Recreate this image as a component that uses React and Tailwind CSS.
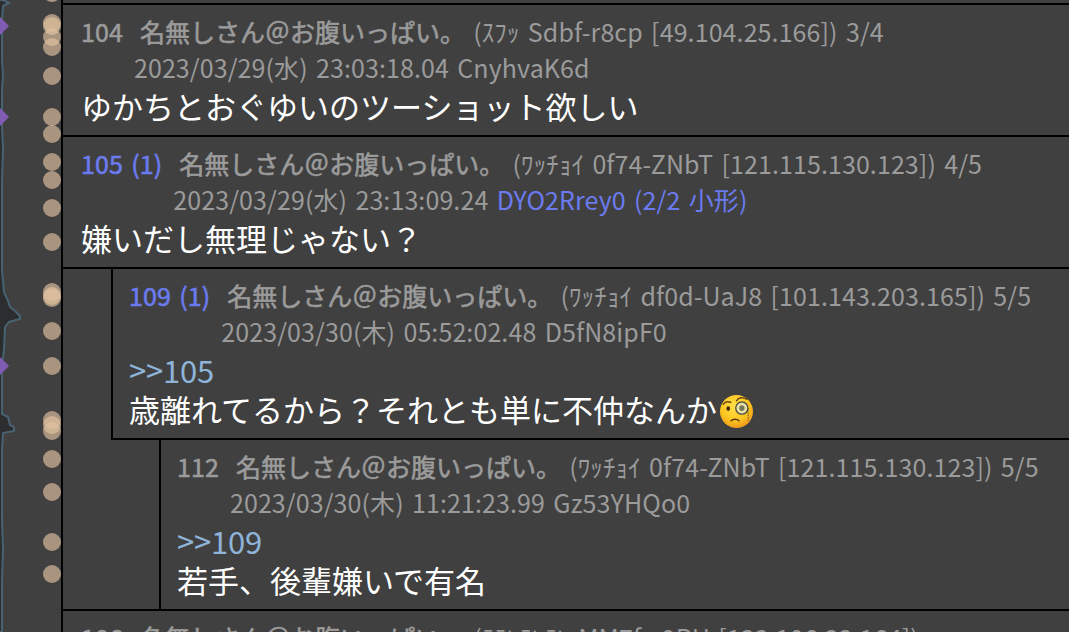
const posts = [
    {
        id: "104",
        level: 0,
        trip: "(ｽﾌｯ Sdbf-r8cp [49.104.25.166]) 3/4",
        date: "2023/03/29(水) 23:03:18.04",
        uid: "CnyhvaK6d",
        body: "ゆかちとおぐゆいのツーショット欲しい",
    },
    {
        id: "105 (1)",
        level: 0,
        popular: true,
        trip: "(ﾜｯﾁｮｲ 0f74-ZNbT [121.115.130.123]) 4/5",
        date: "2023/03/29(水) 23:13:09.24",
        uid: "DYO2Rrey0 (2/2 小形)",
        marked: true,
        body: "嫌いだし無理じゃない？",
    },
    {
        id: "109 (1)",
        level: 1,
        popular: true,
        trip: "(ﾜｯﾁｮｲ df0d-UaJ8 [101.143.203.165]) 5/5",
        date: "2023/03/30(木) 05:52:02.48",
        uid: "D5fN8ipF0",
        anchor: ">>105",
        body: "歳離れてるから？それとも単に不仲なんか",
        emoji: true,
    },
    {
        id: "112",
        level: 2,
        trip: "(ﾜｯﾁｮｲ 0f74-ZNbT [121.115.130.123]) 5/5",
        date: "2023/03/30(木) 11:21:23.99",
        uid: "Gz53YHQo0",
        anchor: ">>109",
        body: "若手、後輩嫌いで有名",
    },
    {
        id: "106",
        level: 0,
        trip: "(ﾃﾃﾝﾃﾝﾃﾝ MM7f-x9RH [133.106.32.164])",
    },
];

const levels = ["pl-[18px]", "ml-12 border-l-2 pl-4", "ml-24 border-l-2 pl-4"];

const dots = [-7, 23, 26, 37, 47, 76, 117, 134, 162, 180, 208, 242, 292, 296, 298, 331, 366, 420, 425, 431, 459, 492, 542, 574];

const MonocleFace = () => (
    <svg viewBox="0 0 36 36" className="inline-block w-[35px] h-[35px] mt-[-5px] ml-[2px] align-[-7px]">
        <defs>
            <radialGradient id="face" cx="45%" cy="35%" r="65%">
                <stop offset="0" stopColor="#ffe04a" />
                <stop offset="0.65" stopColor="#fbc51f" />
                <stop offset="1" stopColor="#ee9a1c" />
            </radialGradient>
        </defs>
        <circle cx="18" cy="18" r="17" fill="url(#face)" />
        <path d="M4.5 10.5C6 8 9 7.4 12 8.5" fill="none" stroke="#6b4518" strokeWidth="1.5" strokeLinecap="round" />
        <path d="M18 7C20 3.5 25 2.8 28.5 5.5" fill="none" stroke="#6b4518" strokeWidth="1.5" strokeLinecap="round" />
        <ellipse cx="9.5" cy="15" rx="1.9" ry="2.5" fill="#422b0d" />
        <circle cx="23.5" cy="14.5" r="6.3" fill="#d9d7a0" stroke="#4b4a42" strokeWidth="1.3" />
        <circle cx="23.5" cy="14.5" r="4.8" fill="#e9e3a6" />
        <ellipse cx="23.5" cy="14.5" rx="2.8" ry="3" fill="#77785f" />
        <path d="M30 14.5V28" fill="none" stroke="#6f5a28" strokeWidth="1" strokeDasharray="1.5 0.8" />
        <path d="M12.5 27.5C14.5 25.5 18.5 25.5 20.5 27.5" fill="none" stroke="#5a3510" strokeWidth="1.7" strokeLinecap="round" />
    </svg>
);

const Timeline = () => (
    <svg width="61" height="632" viewBox="0 0 61 632" className="shrink-0">
        <path
            d="M-2 0H3L9 3L3 6L2 20V60L3 75L2 90V125L3 150L2 180V270L4 292L8 301L10 307L15 311L20 316L20 319L9 322L5 327L4 350L2 365V414L8 417L10 425L14 427V431L3 433L2 450V520L3 550L2 580V632H-2Z"
            fill="#2b2d2e"
            stroke="#486272"
            strokeWidth="2"
        />
        <g fill="#805cb4">
            <path d="M0 17L9 26L0 35Z" />
            <path d="M0 108L9 117L0 126Z" />
            <path d="M0 357L9 366L0 375Z" />
        </g>
        <g fill="#e2c3a1" fillOpacity="0.65">
            {dots.map((y) => (
                <circle key={y} cx="52" cy={y} r="9" />
            ))}
        </g>
    </svg>
);

const Post = ({ post }) => (
    <article className={`border-black pt-[8px] pb-[10px] whitespace-nowrap ${levels[post.level]}`}>
        <header className="flex gap-[11px] mb-px text-[25px] leading-[36px] [word-spacing:2.6px] text-[#9b9b9b]">
            <span className={`tracking-[0.1px] [-webkit-text-stroke:0.6px_currentColor] ${post.popular ? "text-[#6b7bef]" : ""}`}>
                {post.id}
            </span>
            <div>
                <div className="pl-[6px]">
                    <span className="[-webkit-text-stroke:0.6px_currentColor]">名無しさん＠お腹いっぱい。</span>{" "}
                    <span className="tracking-[0.1px]">{post.trip}</span>
                </div>
                {post.date && (
                    <div className="tracking-[0.1px]">
                        {post.date} <span className={post.marked ? "text-[#6b7bef]" : ""}>{post.uid}</span>
                    </div>
                )}
            </div>
        </header>
        {post.body && (
            <div className="text-[31px] leading-[39px] text-white">
                {post.anchor && <div className="text-[#8fb4d9] tracking-[-0.2px]">{post.anchor}</div>}
                <div className="h-[39px]">
                    {post.body}
                    {post.emoji && <MonocleFace />}
                </div>
            </div>
        )}
    </article>
);

export default function App() {
    return (
        <div className="flex w-[1069px] h-[632px] overflow-hidden bg-[#404040] font-['Noto_Sans_CJK_JP',sans-serif]">
            <Timeline />
            <main className="flex-1 min-w-0 border-l-2 border-black pt-[3px]">
                {posts.map((post) => (
                    <div key={post.id}>
                        {/* the deepest reply's rule starts at its parent's edge */}
                        <div className={`border-t-2 border-black ${post.level === 2 ? "ml-12" : ""}`} />
                        <Post post={post} />
                    </div>
                ))}
            </main>
        </div>
    );
}
